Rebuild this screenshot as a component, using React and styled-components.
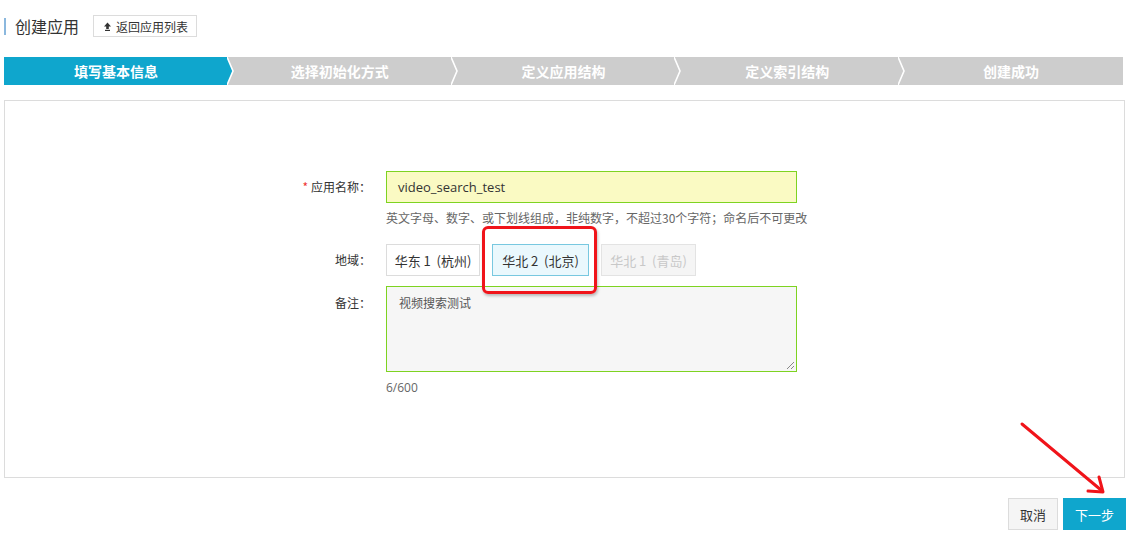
import React from 'react';
import styled, { createGlobalStyle } from 'styled-components';

const font = `"Noto Sans CJK SC", "Open Sans", "Liberation Sans", sans-serif`;

const GlobalStyle = createGlobalStyle`
  html, body {
    margin: 0;
    padding: 0;
    background: #fff;
    font-family: ${font};
    color: #333;
  }
  * { box-sizing: border-box; }
`;

const Page = styled.div`
  position: relative;
  width: 1134px;
  height: 545px;
  padding: 15px 8px 0 4px;
`;

const Header = styled.div`
  display: flex;
  align-items: center;
  height: 22px;
`;

const TitleBar = styled.div`
  width: 2px;
  height: 17px;
  background: #8bb8de;
  margin-right: 9px;
`;

const Title = styled.div`
  font-size: 16px;
  color: #333;
  margin-right: 14px;
  line-height: 22px;
`;

const BackButton = styled.div`
  display: flex;
  align-items: center;
  gap: 4px;
  height: 22px;
  padding: 0 8px 0 9px;
  border: 1px solid #dcdcdc;
  font-size: 12px;
  color: #333;
  background: #fff;
`;

const Steps = styled.div`
  display: flex;
  width: 1119px;
  height: 28px;
  margin-top: 20px;
`;

const Step = styled.div`
  position: relative;
  flex: 1;
  display: flex;
  align-items: center;
  justify-content: center;
  background: ${(p) => (p.$active ? '#0fa6cd' : '#cdcdcd')};
  color: #fff;
  font-size: 14px;
  font-weight: bold;
`;

const ChevronSvg = styled.svg`
  position: absolute;
  right: -6px;
  top: 0;
  z-index: 2;
`;

const Panel = styled.div`
  position: relative;
  width: 1121px;
  height: 378px;
  margin-top: 15px;
  border: 1px solid #dcdcdc;
  padding-top: 70px;
`;

const Form = styled.div`
  display: grid;
  grid-template-columns: 366px 411px;
  column-gap: 15px;
  align-items: start;
`;

const Label = styled.div`
  font-size: 12px;
  color: #333;
  text-align: right;
  line-height: ${(p) => p.$lh || 32}px;
  padding-top: ${(p) => p.$pt || 0}px;
`;

const Required = styled.span`
  color: #e33;
  margin-right: 3px;
`;

const Field = styled.div`
  display: flex;
  flex-direction: column;
`;

const NameInput = styled.div`
  height: 32px;
  border: 1px solid #7ed321;
  background: #fafac3;
  font-size: 13px;
  color: #333;
  padding: 0 11px;
  line-height: 30px;
  font-family: "Open Sans", "Noto Sans", sans-serif;
`;

const Hint = styled.div`
  font-size: 12px;
  color: #666;
  margin-top: 6px;
  line-height: 18px;
  white-space: nowrap;
  margin-bottom: 17px;
`;

const Regions = styled.div`
  position: relative;
  display: flex;
  gap: 12px;
  margin-bottom: 10px;
`;

const Region = styled.div`
  height: 32px;
  width: ${(p) => p.$w}px;
  display: flex;
  align-items: center;
  justify-content: center;
  font-size: 13px;
  white-space: pre;
  border: 1px solid ${(p) => (p.$selected ? '#78c8e0' : p.$disabled ? '#e3e3e3' : '#dcdcdc')};
  background: ${(p) => (p.$selected ? '#eaf8fd' : p.$disabled ? '#f5f5f5' : '#fff')};
  color: ${(p) => (p.$disabled ? '#c8c8c8' : '#333')};
`;

const Highlight = styled.div`
  position: absolute;
  z-index: 5;
  left: 96px;
  top: -18px;
  width: 115px;
  height: 68px;
  border: 3px solid #f0141a;
  border-radius: 6px;
  box-shadow: 1px 2px 3px rgba(0, 0, 0, 0.25);
  pointer-events: none;
`;

const Notes = styled.div`
  position: relative;
  height: 86px;
  border: 1px solid #7ed321;
  background: #f6f6f6;
  font-size: 12px;
  color: #555;
  padding: 7px 12px;
`;

const Grip = styled.svg`
  position: absolute;
  right: 1px;
  bottom: 1px;
`;

const Counter = styled.div`
  font-size: 12px;
  color: #666;
  margin-top: 7px;
  font-family: "Open Sans", "Noto Sans", sans-serif;
`;

const Footer = styled.div`
  display: flex;
  justify-content: flex-end;
  gap: 5px;
  margin-top: 20px;
`;

const Button = styled.div`
  height: 32px;
  width: ${(p) => (p.$primary ? 63 : 50)}px;
  display: flex;
  align-items: center;
  justify-content: center;
  font-size: 13px;
  border: 1px solid ${(p) => (p.$primary ? '#0fa6cd' : '#dcdcdc')};
  background: ${(p) => (p.$primary ? '#0fa6cd' : '#f5f5f5')};
  color: ${(p) => (p.$primary ? '#fff' : '#333')};
`;

const Arrow = styled.svg`
  position: absolute;
  left: 1015px;
  top: 418px;
  pointer-events: none;
`;

const steps = ['填写基本信息', '选择初始化方式', '定义应用结构', '定义索引结构', '创建成功'];

const Chevron = ({ fill }) => (
  <ChevronSvg width="7" height="28" viewBox="0 0 7 28">
    {fill && <polygon points="0,0 6,14 0,28" fill={fill} />}
    <polyline points="0,0 6,14 0,28" fill="none" stroke="#fff" strokeWidth="1.6" />
  </ChevronSvg>
);

const App = () => (
  <>
    <GlobalStyle />
    <Page>
      <Header>
        <TitleBar />
        <Title>创建应用</Title>
        <BackButton>
          <svg width="9" height="9" viewBox="0 0 9 9">
            <polygon points="4.5,0.5 8,4.5 5.8,4.5 5.8,7 3.2,7 3.2,4.5 1,4.5" fill="#333" />
            <rect x="2" y="7.8" width="5" height="1.2" fill="#333" />
          </svg>
          返回应用列表
        </BackButton>
      </Header>

      <Steps>
        {steps.map((s, i) => (
          <Step key={s} $active={i === 0}>
            {s}
            {i < steps.length - 1 && <Chevron fill={i === 0 ? '#0fa6cd' : null} />}
          </Step>
        ))}
      </Steps>

      <Panel>
        <Form>
          <Label>
            <Required>*</Required>应用名称：
          </Label>
          <Field>
            <NameInput>video_search_test</NameInput>
            <Hint>英文字母、数字、或下划线组成，非纯数字，不超过30个字符；命名后不可更改</Hint>
          </Field>

          <Label>地域：</Label>
          <Field>
            <Regions>
              <Region $w={94}>华东 1  (杭州)</Region>
              <Region $w={97} $selected>华北 2  (北京)</Region>
              <Region $w={95} $disabled>华北 1  (青岛)</Region>
              <Highlight />
            </Regions>
          </Field>

          <Label $lh={18} $pt={8}>备注：</Label>
          <Field>
            <Notes>
              视频搜索测试
              <Grip width="9" height="9" viewBox="0 0 9 9">
                <line x1="8" y1="1" x2="1" y2="8" stroke="#888" strokeWidth="1" />
                <line x1="8" y1="5" x2="5" y2="8" stroke="#888" strokeWidth="1" />
              </Grip>
            </Notes>
            <Counter>6/600</Counter>
          </Field>
        </Form>
      </Panel>

      <Footer>
        <Button>取消</Button>
        <Button $primary>下一步</Button>
      </Footer>

      <Arrow width="100" height="85" viewBox="0 0 100 85">
        <line x1="7" y1="6" x2="86" y2="72" stroke="#f0141a" strokeWidth="3" strokeLinecap="round" />
        <polyline points="73,73 88,74 84,59" fill="none" stroke="#f0141a" strokeWidth="3" strokeLinecap="round" strokeLinejoin="round" />
      </Arrow>
    </Page>
  </>
);

export default App;
